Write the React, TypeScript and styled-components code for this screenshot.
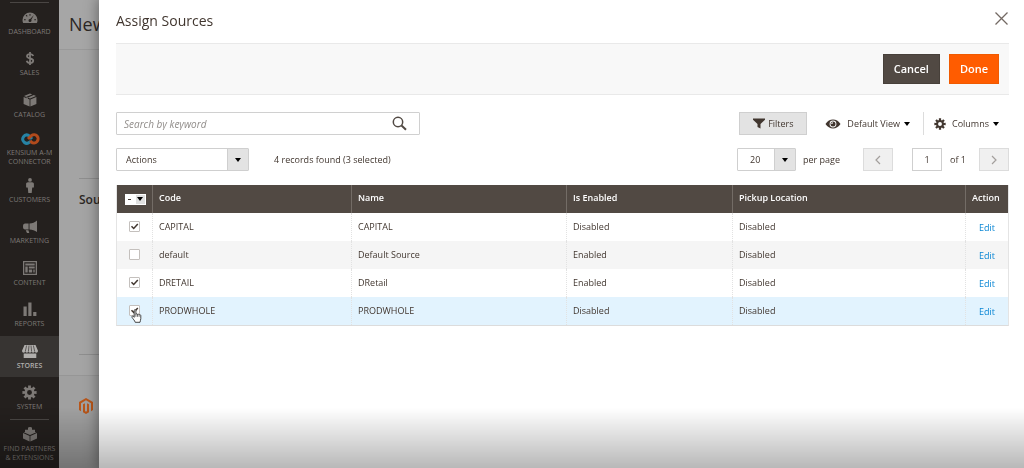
import React, { useEffect, useRef, useState } from "react";
import styled, { createGlobalStyle, css } from "styled-components";

const GlobalStyle = createGlobalStyle`
  *, *::before, *::after { box-sizing: border-box; }
  html, body { margin: 0; height: 100%; overflow: hidden; }
  body {
    font-family: "Open Sans", "Noto Sans", sans-serif;
    font-size: 9px;
    line-height: 12px;
    color: #41362f;
    background: #a4a4a4;
  }
  button, input, select { font: inherit; color: inherit; margin: 0; }
  button { cursor: pointer; }
  svg { display: block; flex: none; }
`;

/* ---------- page behind the modal ---------- */

const Shell = styled.div`
  display: flex;
  height: 100vh;
  overflow: hidden;
`;

const Sidebar = styled.nav`
  width: 59px;
  flex: none;
  background: #24201e;
  overflow: hidden;
`;

const MenuList = styled.ul`
  list-style: none;
  margin: 0;
  padding: 2px 0 0;
`;

const MenuItem = styled.li<{ $active?: boolean; $ruled?: boolean; $tall?: boolean }>`
  min-height: ${(p) => (p.$tall ? 44 : 41)}px;
  padding-top: ${(p) => (p.$tall ? 5 : 8)}px;
  background: ${(p) => (p.$active ? "#373432" : "transparent")};
  color: ${(p) => (p.$active ? "#b0aeac" : "#7d7976")};
  font-weight: ${(p) => (p.$active ? 600 : 400)};
  ${(p) =>
    !p.$tall &&
    css`
      &:nth-child(even) {
        min-height: 42px;
      }
    `}
  ${(p) =>
    p.$ruled &&
    css`
      background: linear-gradient(#4a4644, #4a4644) center top / 39px 1px no-repeat;
    `}
`;

const MenuLink = styled.a`
  display: flex;
  flex-direction: column;
  align-items: center;
  gap: 2px;
  color: inherit;
  text-decoration: none;
  text-align: center;
  text-transform: uppercase;
  white-space: pre-line;
  font-size: 7px;
  line-height: 9px;
`;

const Page = styled.div`
  flex: 1;
  display: flex;
  flex-direction: column;
  background: #a4a4a4;
`;

const PageHeader = styled.header`
  height: 50px;
  padding: 10px 10px 0;
  background: #a6a6a6;
  border-bottom: 1px solid #999;
`;

const PageTitle = styled.h1`
  margin: 0;
  font-size: 18px;
  line-height: 28px;
  font-weight: 400;
  color: #2c2724;
`;

const PageBody = styled.div`
  flex: 1;
  display: flex;
  flex-direction: column;
  padding: 128px 20px 20px;
`;

const SourcesSection = styled.section`
  flex: 1;
  border-top: 1px solid #8e8e8e;
  border-bottom: 1px solid #8e8e8e;
  padding-top: 12px;
`;

const SectionTitle = styled.h2`
  margin: 0;
  font-size: 12px;
  line-height: 18px;
  font-weight: 600;
  color: #2c2724;
`;

const PageFooter = styled.footer`
  height: 93px;
  padding: 22px 20px;
  background: #a0a0a0;
  border-top: 1px solid #969696;
`;

/* ---------- modal ---------- */

const Modal = styled.section`
  position: fixed;
  inset: 0 0 0 99px;
  padding: 0 15px 0 17px;
  background: #fff;
  box-shadow: 0 0 12px 2px rgba(0, 0, 0, 0.35);
`;

const BottomShade = styled.div`
  position: fixed;
  inset: auto 0 0;
  height: 60px;
  pointer-events: none;
  background: linear-gradient(rgba(0, 0, 0, 0), rgba(0, 0, 0, 0.28));
`;

const ModalHeader = styled.header`
  display: flex;
  justify-content: space-between;
  align-items: center;
  height: 43px;
  padding-bottom: 2px;
`;

const ModalTitle = styled.h2`
  margin: 0;
  font-size: 14px;
  line-height: 20px;
  font-weight: 400;
`;

const CloseButton = styled.button`
  padding: 1px;
  margin-bottom: 4px;
  border: 0;
  background: none;
  color: #736963;
`;

const ActionBar = styled.div`
  display: flex;
  justify-content: flex-end;
  align-items: center;
  gap: 9px;
  height: 52px;
  padding: 0 10px;
  background: #f8f8f8;
  border-top: 1px solid #e9e9e9;
  border-bottom: 1px solid #e9e9e9;
`;

const ActionButton = styled.button<{ $primary?: boolean }>`
  height: 30px;
  padding: 0 10px;
  border: 1px solid ${(p) => (p.$primary ? "#f05a00" : "#47403a")};
  background: ${(p) => (p.$primary ? "#ff5c00" : "#514943")};
  color: #fff;
  font-size: 11px;
  line-height: 16px;
  font-weight: 600;
`;

const Toolbar = styled.div`
  display: flex;
  justify-content: space-between;
  align-items: center;
  height: 23px;
  margin-top: 17px;

  & + & {
    margin-top: 13px;
  }
`;

const Group = styled.div<{ $gap: number }>`
  display: flex;
  align-items: center;
  gap: ${(p) => p.$gap}px;
  height: 100%;
`;

const SearchBox = styled.form`
  display: flex;
  align-items: center;
  width: 304px;
  height: 23px;
  padding-right: 12px;
  border: 1px solid #d0d0d0;
  border-radius: 1px;
`;

const SearchInput = styled.input`
  flex: 1;
  min-width: 0;
  padding: 0 7px;
  border: 0;
  outline: 0;
  background: none;
  font-size: 10px;

  &::placeholder {
    color: #918d8a;
    font-style: italic;
    opacity: 1;
  }
`;

const IconButton = styled.button`
  padding: 0;
  border: 0;
  background: none;
`;

const FiltersButton = styled.button`
  display: flex;
  align-items: center;
  justify-content: center;
  gap: 3px;
  width: 68px;
  height: 23px;
  padding: 0;
  border: 1px solid #cfcfcf;
  background: #e3e3e3;
`;

const MenuButton = styled.button`
  display: flex;
  align-items: center;
  height: 23px;
  padding: 0 10px;
  border: 0;
  background: none;

  & + & {
    border-left: 1px solid #dcdcdc;
  }
`;

const MenuText = styled.span`
  margin: 0 4px 0 6px;
`;

const SelectBox = styled.span<{ $width: number }>`
  display: grid;
  grid-template-columns: 1fr 21px;
  width: ${(p) => p.$width}px;
  height: 23px;
  border: 1px solid #cfcfcf;
  border-radius: 1px;

  select {
    grid-area: 1 / 1 / 2 / 3;
    appearance: none;
    border: 0;
    outline: 0;
    padding: 0 9px;
    background: #fff;
  }

  span {
    grid-area: 1 / 2;
    display: grid;
    place-items: center;
    background: #e3e3e3;
    border-left: 1px solid #cfcfcf;
    pointer-events: none;
  }
`;

const PerPageSelect = styled(SelectBox)`
  select {
    padding: 0 12px;
  }
`;

const PagerButton = styled.button`
  display: grid;
  place-items: center;
  width: 30px;
  height: 23px;
  padding: 0;
  border: 1px solid #dcdcdc;
  background: #f0f0f0;
  color: #a39f9c;
`;

const PageInput = styled.input`
  width: 30px;
  height: 23px;
  padding: 0;
  border: 1px solid #cfcfcf;
  text-align: center;
`;

const PagerText = styled.span<{ $end: number }>`
  margin-right: ${(p) => p.$end}px;
`;

const Grid = styled.table`
  width: 100%;
  margin-top: 14px;
  table-layout: fixed;
  border-collapse: separate;
  border-spacing: 0;
  border-bottom: 1px solid #dcdcdc;
  border-right: 1px solid #e4e4e4;
  border-left: 1px solid #e4e4e4;
`;

const HeadCell = styled.th`
  height: 28px;
  padding: 0 6px 2px;
  background: #514943;
  border-left: 1px solid #736c66;
  color: #fff;
  text-align: left;
  font-weight: 600;
  white-space: nowrap;

  &:first-child {
    border-left-color: #514943;
  }
`;

const Row = styled.tr<{ $tone: string }>`
  background: ${(p) => p.$tone};
`;

const Cell = styled.td<{ $action?: boolean }>`
  height: 28px;
  padding: ${(p) => (p.$action ? "1px 0 0" : "0 6px 1px")};
  text-align: ${(p) => (p.$action ? "center" : "left")};
  border-left: 1px dotted #e2e2e2;

  &:first-child {
    border-left: 0;
    padding: 0 0 1px;
  }
`;

const EditLink = styled.a`
  color: #0a86d4;
  text-decoration: none;
`;

const TickWrap = styled.label`
  position: relative;
  display: grid;
  width: 11px;
  height: 11px;
  margin: 0 auto;

  input {
    grid-area: 1 / 1;
    appearance: none;
    width: 11px;
    height: 11px;
    border: 1px solid #c4c0bd;
    border-radius: 1px;
    background: #fff;
  }
`;

const TickMark = styled.svg`
  grid-area: 1 / 1;
  visibility: hidden;
  pointer-events: none;

  input:checked + & {
    visibility: visible;
  }
`;

const Pointer = styled.svg`
  position: absolute;
  left: 2px;
  top: 4px;
  pointer-events: none;
`;

const MassSelect = styled.div`
  display: flex;
  width: 21px;
  height: 11px;
  margin: 2px auto 0;
  background: #fff;

  input {
    appearance: none;
    display: grid;
    place-items: center;
    width: 10px;
    height: 11px;
  }

  input::before {
    content: "";
    width: 3px;
    height: 1px;
    background: #41362f;
  }

  button {
    display: grid;
    place-items: center;
    width: 11px;
    padding: 0;
    border: 1px solid #fff;
    background: #e0e0e0;
  }
`;

/* ---------- icons ---------- */

const Caret = () => (
  <svg width="6" height="4" viewBox="0 0 6 4" aria-hidden="true">
    <path d="M0 0h6L3 4z" fill="#000" />
  </svg>
);

const gearPath = (() => {
  const pts: string[] = [];
  const teeth = 8;
  for (let i = 0; i < teeth; i++) {
    const a = (i * 2 * Math.PI) / teeth;
    [[-0.27, 5.4], [-0.2, 7.7], [0.2, 7.7], [0.27, 5.4]].forEach(([d, r]) => {
      pts.push(`${(8 + r * Math.sin(a + d)).toFixed(2)} ${(8 - r * Math.cos(a + d)).toFixed(2)}`);
    });
  }
  return `M${pts.join("L")}ZM8 5.4a2.6 2.6 0 1 0 0 5.2a2.6 2.6 0 1 0 0-5.2Z`;
})();

const Gear = ({ size }: { size: number }) => (
  <svg width={size} height={size} viewBox="0 0 16 16" aria-hidden="true">
    <path d={gearPath} fill="currentColor" fillRule="evenodd" />
  </svg>
);

const MenuIcon = ({ children, width = 16 }: { children: React.ReactNode; width?: number }) => (
  <svg width={width} height="15" viewBox={`0 0 ${width} 15`} fill="currentColor" aria-hidden="true">
    {children}
  </svg>
);

const icons: Record<string, React.ReactNode> = {
  dashboard: (
    <MenuIcon>
      <path
        fillRule="evenodd"
        d="M8 2.500A7.500 7.500 0 0 0 .5 10c0 1.200.2 2.200.7 3.100h13.600c.5-.9.7-1.900.7-3.100A7.500 7.500 0 0 0 8 2.500zM7.500 3.900h1v1.800h-1zM3.700 5.500l.7-.7 1.200 1.200-.7.700zM2 9.300h1.700v1H2zM12.300 9.300H14v1h-1.700zM11.900 5.100 9.300 9.700a1.500 1.500 0 1 1-1.100-.7z"
      />
    </MenuIcon>
  ),
  sales: (
    <MenuIcon>
      <path
        d="M11.200 5C10.800 3.700 9.700 3.100 8 3.100S5 3.900 5 5.200c0 3 6.200 1.400 6.200 4.500 0 1.300-1.200 2.200-3.100 2.200-1.800 0-3-.8-3.400-2.200M8 1v13"
        fill="none"
        stroke="currentColor"
        strokeWidth="1.800"
      />
    </MenuIcon>
  ),
  catalog: (
    <MenuIcon>
      <path d="M8 .5 10.200 1.400 4.500 3.800V5.300L6 5.900V4.400L11.800 2 14 3 8 5.500 2 3zM1.600 3.900 7.600 6.400V13.500L1.600 11zM14.400 3.900 8.400 6.400V13.500L14.400 11z" />
    </MenuIcon>
  ),
  kensium: (
    <MenuIcon width={20}>
      <path
        d="M11 10.300 9.600 11.200A4.100 4.100 0 1 1 8.600 4.400L12 8"
        fill="none"
        stroke="#2683a5"
        strokeWidth="3"
      />
      <path
        d="M8 8 11.400 4.700A4.100 4.100 0 1 1 11.200 10.800L10.200 9.900"
        fill="none"
        stroke="#b14a1c"
        strokeWidth="3"
      />
    </MenuIcon>
  ),
  customers: (
    <MenuIcon>
      <circle cx="8" cy="1.900" r="1.900" />
      <path d="M6 4.200h4c1.200 0 1.900.7 1.900 1.900V9.500h-1.300L10.200 9.800 9.700 15H6.300L5.800 9.800 5.400 9.500H4.100V6.100C4.100 4.900 4.800 4.200 6 4.200z" />
    </MenuIcon>
  ),
  marketing: (
    <MenuIcon>
      <path d="M15 1.500V13C12.700 11.200 10.500 10.500 7.500 10.400V4.600C10.500 4.500 12.800 3.500 15 1.500zM6.600 4.600v5.900H3.300C1.500 10.500 1 9.400 1 7.500s.6-2.900 2.300-2.900zM3.700 11.200h2.700l.9 2.800H5z" />
    </MenuIcon>
  ),
  content: (
    <MenuIcon>
      <path
        fillRule="evenodd"
        d="M1 0h14v14H1zM2.300 1.300v11.400h11.400V1.300zM3.300 2.500h9.400v2H3.300zM3.300 5.600h2.400v6H3.300zM6.800 5.600h5.900v1.800H6.800zM6.800 8.500h3.400v3.100H6.800zM11.300 8.500h1.400v3.100h-1.400z"
      />
    </MenuIcon>
  ),
  reports: (
    <MenuIcon>
      <path d="M1.500 4.500h3.200V14H1.500zM6.300.5h3.200V14H6.300zM11.200 10h3.200v4h-3.200z" />
    </MenuIcon>
  ),
  stores: (
    <MenuIcon>
      <path d="M2.500 1h11L16 6.700c0 1.300-.8 2-1.700 2-.8 0-1.400-.5-1.600-1.200-.2.700-.8 1.200-1.600 1.200S9.800 8.200 9.600 7.500c-.2.700-.8 1.200-1.600 1.200S6.600 8.200 6.400 7.500c-.2.700-.7 1.200-1.500 1.200S3.500 8.200 3.300 7.500c-.2.700-.8 1.200-1.600 1.200S0 8 0 6.700zM1.700 9.500h12.600V14H1.700z" />
      <path d="M4.600 1.500 3.300 7.500M7 1.500 6.400 7.500M9 1.500l.6 6M11.400 1.500l1.300 6" stroke="#373432" strokeWidth=".7" />
    </MenuIcon>
  ),
  system: <Gear size={15} />,
  partners: (
    <MenuIcon>
      <path d="M8 3.500 14.300 5.200 8 8 1.700 5.200zM1 6 7.600 8.900V14.500L1 11.500zM15 6 8.400 8.900V14.500L15 11.500z" />
      <path d="M3 2.700v2.200l2 .8 2-.8V2.700zM9 2.700v2.200l2 .8 2-.8V2.700zM6 .9v2.300l2 .8 2-.8V.9z" />
      <ellipse cx="8" cy="1" rx="2" ry=".9" />
    </MenuIcon>
  ),
};

const SearchIcon = () => (
  <svg width="15" height="15" viewBox="0 0 15 15" fill="none" stroke="#514943" aria-hidden="true">
    <circle cx="6" cy="6" r="4.700" strokeWidth="1.500" />
    <path d="M9.500 9.500 14 13.800" strokeWidth="2" />
  </svg>
);

const Funnel = () => (
  <svg width="12" height="11" viewBox="0 0 12 11" fill="#41362f" aria-hidden="true">
    <path d="M0 .5h12v1.300L7.500 6v4.500L4.500 9V6L0 1.800z" />
  </svg>
);

const Eye = () => (
  <svg width="16" height="10" viewBox="0 0 16 10" aria-hidden="true">
    <path
      fill="#41362f"
      fillRule="evenodd"
      d="M.5 5C2.500 2 5 .6 8 .6S13.500 2 15.500 5C13.500 8 11 9.400 8 9.400S2.500 8 .5 5zM8 1.600a3.400 3.400 0 1 0 0 6.800 3.400 3.400 0 1 0 0-6.800z"
    />
    <path
      fill="#41362f"
      fillRule="evenodd"
      d="M8 2.500a2.500 2.500 0 1 0 0 5 2.500 2.500 0 1 0 0-5zM8 3.200v1.100a.8.800 0 0 0-.8.800h-1A1.800 1.800 0 0 1 8 3.200z"
    />
  </svg>
);

const Chevron = ({ flip }: { flip?: boolean }) => (
  <svg width="6" height="10" viewBox="0 0 6 10" fill="none" stroke="currentColor" strokeWidth="1.200" aria-hidden="true">
    <path d={flip ? "M1 1l4 4-4 4" : "M5 1 1 5l4 4"} />
  </svg>
);

const MagentoLogo = () => (
  <svg width="14" height="16" viewBox="0 0 14 16" fill="#b8561a" aria-label="Magento" role="img">
    <path d="M7 0 14 4v8.100l-2 1.100V5.200L7 2.300 2 5.200v8l-2-1.100V4z" />
    <path d="M4 6.300 6 5.200v7.900l1 .6 1-.6V5.200l2 1.100v8L7 16l-3-1.700z" />
  </svg>
);

const HandPointer = () => (
  <Pointer width="11" height="14" viewBox="0 0 11 14" aria-hidden="true">
    <path
      d="M3.200 8.300V1.400C3.200.3 4.900.3 4.900 1.400V5.200C5 4.500 6.500 4.600 6.500 5.500 6.700 4.900 8.100 5 8.100 5.900 8.400 5.400 9.800 5.500 9.800 6.600V9.600C9.800 11 9.200 11.600 9 13.300H4.200C3.900 11.600 2 10.200 1 8.300.5 7.200 1.800 6.700 2.400 7.400z"
      fill="#fff"
      stroke="#333"
      strokeWidth=".9"
    />
    <path d="M4.900 5v2.800M6.500 5.500v2.300M8.100 6v1.800" stroke="#333" strokeWidth=".7" />
  </Pointer>
);

/* ---------- content ---------- */

const menu = [
  { icon: "dashboard", label: "Dashboard", ruled: true },
  { icon: "sales", label: "Sales" },
  { icon: "catalog", label: "Catalog" },
  { icon: "kensium", label: "Kensium A-M\nConnector", tall: true },
  { icon: "customers", label: "Customers" },
  { icon: "marketing", label: "Marketing" },
  { icon: "content", label: "Content" },
  { icon: "reports", label: "Reports" },
  { icon: "stores", label: "Stores", active: true },
  { icon: "system", label: "System" },
  { icon: "partners", label: "Find Partners\n& Extensions", ruled: true },
];

const sources = [
  { code: "CAPITAL", name: "CAPITAL", enabled: "Disabled", pickup: "Disabled", selected: true },
  { code: "default", name: "Default Source", enabled: "Enabled", pickup: "Disabled", selected: false },
  { code: "DRETAIL", name: "DRetail", enabled: "Enabled", pickup: "Disabled", selected: true },
  { code: "PRODWHOLE", name: "PRODWHOLE", enabled: "Disabled", pickup: "Disabled", selected: true, hovered: true },
];

const Tick = ({ label, initial, hovered }: { label: string; initial: boolean; hovered?: boolean }) => {
  const [checked, setChecked] = useState(initial);
  return (
    <TickWrap>
      <input type="checkbox" aria-label={label} checked={checked} onChange={(e) => setChecked(e.target.checked)} />
      <TickMark width="11" height="11" viewBox="0 0 11 11" fill="none" aria-hidden="true">
        <path d="M2.500 5.300 4.700 7.500 8.800 3" stroke="#41362f" strokeWidth="1.500" />
      </TickMark>
      {hovered && <HandPointer />}
    </TickWrap>
  );
};

export default function App() {
  const massRef = useRef<HTMLInputElement>(null);
  useEffect(() => {
    if (massRef.current) massRef.current.indeterminate = true;
  }, []);

  return (
    <>
      <GlobalStyle />
      <Shell>
        <Sidebar aria-label="Main menu">
          <MenuList>
            {menu.map((m) => (
              <MenuItem key={m.icon} $active={m.active} $ruled={m.ruled} $tall={m.tall}>
                <MenuLink href="#">
                  {icons[m.icon]}
                  <span>{m.label}</span>
                </MenuLink>
              </MenuItem>
            ))}
          </MenuList>
        </Sidebar>
        <Page>
          <PageHeader>
            <PageTitle>New</PageTitle>
          </PageHeader>
          <PageBody>
            <SourcesSection>
              <SectionTitle>Sou</SectionTitle>
            </SourcesSection>
          </PageBody>
          <PageFooter>
            <MagentoLogo />
          </PageFooter>
        </Page>
      </Shell>

      <Modal role="dialog" aria-labelledby="modal-title">
        <ModalHeader>
          <ModalTitle id="modal-title">Assign Sources</ModalTitle>
          <CloseButton type="button" aria-label="Close">
            <svg width="13" height="13" viewBox="0 0 13 13" stroke="currentColor" strokeWidth="1.300" aria-hidden="true">
              <path d="M.5.5l12 12M12.500.5l-12 12" />
            </svg>
          </CloseButton>
        </ModalHeader>

        <ActionBar>
          <ActionButton type="button">Cancel</ActionButton>
          <ActionButton type="button" $primary>
            Done
          </ActionButton>
        </ActionBar>

        <Toolbar>
          <SearchBox onSubmit={(e) => e.preventDefault()}>
            <SearchInput type="text" placeholder="Search by keyword" aria-label="Search by keyword" />
            <IconButton type="submit" aria-label="Search">
              <SearchIcon />
            </IconButton>
          </SearchBox>
          <Group $gap={8}>
            <FiltersButton type="button">
              <Funnel />
              Filters
            </FiltersButton>
            <Group $gap={3}>
              <MenuButton type="button">
                <Eye />
                <MenuText>Default View</MenuText>
                <Caret />
              </MenuButton>
              <MenuButton type="button">
                <Gear size={12} />
                <MenuText>Columns</MenuText>
                <Caret />
              </MenuButton>
            </Group>
          </Group>
        </Toolbar>

        <Toolbar>
          <Group $gap={25}>
            <SelectBox $width={133}>
              <select aria-label="Actions">
                <option>Actions</option>
              </select>
              <span>
                <Caret />
              </span>
            </SelectBox>
            <span>4 records found (3 selected)</span>
          </Group>
          <Group $gap={7}>
            <PerPageSelect $width={59}>
              <select id="per-page" defaultValue="20">
                <option>20</option>
              </select>
              <span>
                <Caret />
              </span>
            </PerPageSelect>
            <PagerText as="label" htmlFor="per-page" $end={16}>
              per page
            </PagerText>
            <PagerButton type="button" aria-label="Previous page">
              <Chevron />
            </PagerButton>
            <Group $gap={8}>
              <PagerText $end={4} />
              <PageInput type="text" defaultValue="1" aria-label="Page" />
              <PagerText $end={6}>of 1</PagerText>
            </Group>
            <PagerButton type="button" aria-label="Next page">
              <Chevron flip />
            </PagerButton>
          </Group>
        </Toolbar>

        <Grid>
          <colgroup>
            <col style={{ width: 35 }} />
            <col style={{ width: 199 }} />
            <col style={{ width: 215 }} />
            <col style={{ width: 166 }} />
            <col />
            <col style={{ width: 43 }} />
          </colgroup>
          <thead>
            <tr>
              <HeadCell>
                <MassSelect>
                  <input ref={massRef} type="checkbox" aria-label="Select all" />
                  <button type="button" aria-label="Selection options">
                    <Caret />
                  </button>
                </MassSelect>
              </HeadCell>
              <HeadCell>Code</HeadCell>
              <HeadCell>Name</HeadCell>
              <HeadCell>Is Enabled</HeadCell>
              <HeadCell>Pickup Location</HeadCell>
              <HeadCell>Action</HeadCell>
            </tr>
          </thead>
          <tbody>
            {sources.map((s, i) => (
              <Row key={s.code} $tone={s.hovered ? "#e2f3fe" : i % 2 ? "#f5f5f5" : "#fff"}>
                <Cell>
                  <Tick label={`Select ${s.code}`} initial={s.selected} hovered={s.hovered} />
                </Cell>
                <Cell>{s.code}</Cell>
                <Cell>{s.name}</Cell>
                <Cell>{s.enabled}</Cell>
                <Cell>{s.pickup}</Cell>
                <Cell $action>
                  <EditLink href="#">Edit</EditLink>
                </Cell>
              </Row>
            ))}
          </tbody>
        </Grid>
      </Modal>
      <BottomShade />
    </>
  );
}
